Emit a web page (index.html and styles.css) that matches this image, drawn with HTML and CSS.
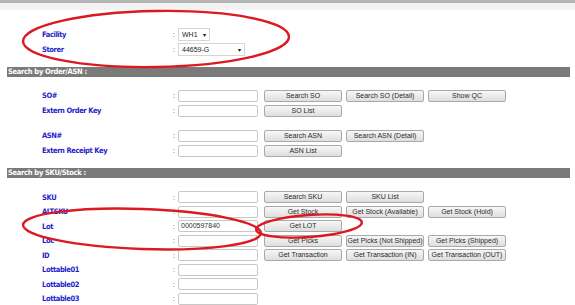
FILE: index.html
```html
<!DOCTYPE html>
<html lang="en">
<head>
    <meta charset="UTF-8">
    <title>Inquiry</title>
    <link rel="stylesheet" href="styles.css">
</head>
<body>
    <div class="topbar"></div>
    <div class="subbar"></div>

    <div class="page">
        <!-- Facility / Storer -->
        <div class="fields top-fields">
            <div class="row">
                <label>Facility</label><span class="colon">:</span>
                <div class="select select-short">WH1<span class="caret">▾</span></div>
            </div>
            <div class="row">
                <label>Storer</label><span class="colon">:</span>
                <div class="select select-long">44659-G<span class="caret">▾</span></div>
            </div>
        </div>

        <!-- Order / ASN -->
        <div class="section-title">Search by Order/ASN :</div>
        <div class="fields order-fields">
            <div class="row">
                <label>SO#</label><span class="colon">:</span><div class="input"></div>
                <div class="buttons">
                    <button class="btn">Search SO</button>
                    <button class="btn">Search SO (Detail)</button>
                    <button class="btn">Show QC</button>
                </div>
            </div>
            <div class="row">
                <label>Extern Order Key</label><span class="colon">:</span><div class="input"></div>
                <div class="buttons">
                    <button class="btn">SO List</button>
                </div>
            </div>
            <div class="spacer"></div>
            <div class="row">
                <label>ASN#</label><span class="colon">:</span><div class="input"></div>
                <div class="buttons">
                    <button class="btn">Search ASN</button>
                    <button class="btn">Search ASN (Detail)</button>
                </div>
            </div>
            <div class="row">
                <label>Extern Receipt Key</label><span class="colon">:</span><div class="input"></div>
                <div class="buttons">
                    <button class="btn">ASN List</button>
                </div>
            </div>
        </div>

        <!-- SKU / Stock -->
        <div class="section-title">Search by SKU/Stock :</div>
        <div class="fields sku-fields">
            <div class="row">
                <label>SKU</label><span class="colon">:</span><div class="input"></div>
                <div class="buttons">
                    <button class="btn">Search SKU</button>
                    <button class="btn">SKU List</button>
                </div>
            </div>
            <div class="row">
                <label>ALTSKU</label><span class="colon">:</span><div class="input"></div>
                <div class="buttons">
                    <button class="btn">Get Stock</button>
                    <button class="btn">Get Stock (Available)</button>
                    <button class="btn">Get Stock (Hold)</button>
                </div>
            </div>
            <div class="row">
                <label>Lot</label><span class="colon">:</span><div class="input">0000597840</div>
                <div class="buttons">
                    <button class="btn">Get LOT</button>
                </div>
            </div>
            <div class="row">
                <label>Loc</label><span class="colon">:</span><div class="input"></div>
                <div class="buttons">
                    <button class="btn">Get Picks</button>
                    <button class="btn">Get Picks (Not Shipped)</button>
                    <button class="btn">Get Picks (Shipped)</button>
                </div>
            </div>
            <div class="row">
                <label>ID</label><span class="colon">:</span><div class="input"></div>
                <div class="buttons">
                    <button class="btn">Get Transaction</button>
                    <button class="btn">Get Transaction (IN)</button>
                    <button class="btn">Get Transaction (OUT)</button>
                </div>
            </div>
            <div class="row">
                <label>Lottable01</label><span class="colon">:</span><div class="input"></div>
            </div>
            <div class="row">
                <label>Lottable02</label><span class="colon">:</span><div class="input"></div>
            </div>
            <div class="row">
                <label>Lottable03</label><span class="colon">:</span><div class="input"></div>
            </div>
        </div>
    </div>

    <!-- red marker annotations drawn over the form -->
    <svg class="marks" width="575" height="305" viewBox="0 0 575 305">
        <ellipse cx="156" cy="39" rx="133" ry="28" transform="rotate(-1 156 39)"/>
        <ellipse cx="142" cy="229" rx="119" ry="20" transform="rotate(2 142 229)"/>
        <ellipse cx="309" cy="226" rx="53" ry="11" transform="rotate(-4 309 226)"/>
    </svg>
</body>
</html>
```

FILE: styles.css
```css
:root {
    --label: #1e1ecc;
    --header: #7a7a7a;
    --border: #c8c8c8;
    --btn-border: #a9a9a9;
    --marker: #dc1820;
}

* {
    box-sizing: border-box;
    margin: 0;
    padding: 0;
}

body {
    position: relative;
    width: 575px;
    height: 305px;
    overflow: hidden;
    background: white;
    font-family: 'Liberation Sans', Arial, sans-serif;
    color: #333;
}

.topbar {
    height: 3px;
    background: #b4b4b4;
}

.subbar {
    height: 7px;
    background: #f3f3f3;
}

/* Строки формы */
.fields {
    padding-left: 42px;
}

.top-fields {
    padding-top: 17px;
    padding-bottom: 10px;
}

.order-fields {
    padding-top: 11px;
    padding-bottom: 10px;
}

.sku-fields {
    padding-top: 12px;
}

.row {
    display: grid;
    grid-template-columns: 131px 5px 80px auto;
    align-items: center;
    height: 15px;
}

.sku-fields .row {
    height: 14.5px;
}

.spacer {
    height: 10px;
}

label {
    font-family: 'DejaVu Sans Condensed', 'DejaVu Sans', sans-serif;
    font-weight: bold;
    font-size: 7.5px;
    letter-spacing: -0.4px;
    color: var(--label);
    white-space: nowrap;
}

.colon {
    font-size: 7px;
    color: #444;
}

.input {
    height: 12px;
    width: 80px;
    border: 1px solid var(--border);
    border-radius: 2px;
    background: white;
    font-size: 7px;
    line-height: 10px;
    padding-left: 2px;
    color: #333;
}

.select {
    display: flex;
    justify-content: space-between;
    align-items: center;
    height: 13px;
    border: 1px solid #d6d6d6;
    background: white;
    font-size: 7px;
    padding: 0 3px 0 3px;
    color: #222;
}

.select-short { width: 32px; }
.select-long { width: 67px; }

.caret {
    font-size: 6px;
    color: #111;
}

/* Кнопки */
.buttons {
    display: flex;
    gap: 4px;
    margin-left: 6px;
}

.btn {
    width: 78px;
    height: 12px;
    border: 1px solid var(--btn-border);
    border-radius: 2px;
    background: linear-gradient(#f7f7f7, #dedede);
    font-family: 'Liberation Sans', Arial, sans-serif;
    font-size: 7px;
    line-height: 10px;
    color: #2a2a2a;
    white-space: nowrap;
}

/* Заголовки секций */
.section-title {
    height: 10px;
    margin: 0 5px 0 7px;
    padding-left: 1px;
    background: var(--header);
    color: white;
    font-family: 'DejaVu Sans Condensed', 'DejaVu Sans', sans-serif;
    font-weight: bold;
    font-size: 7.5px;
    letter-spacing: -0.3px;
    line-height: 10px;
}

/* Пометки маркером */
.marks {
    position: absolute;
    top: 0;
    left: 0;
    pointer-events: none;
}

.marks ellipse {
    fill: none;
    stroke: var(--marker);
    stroke-width: 2.4;
}
```
